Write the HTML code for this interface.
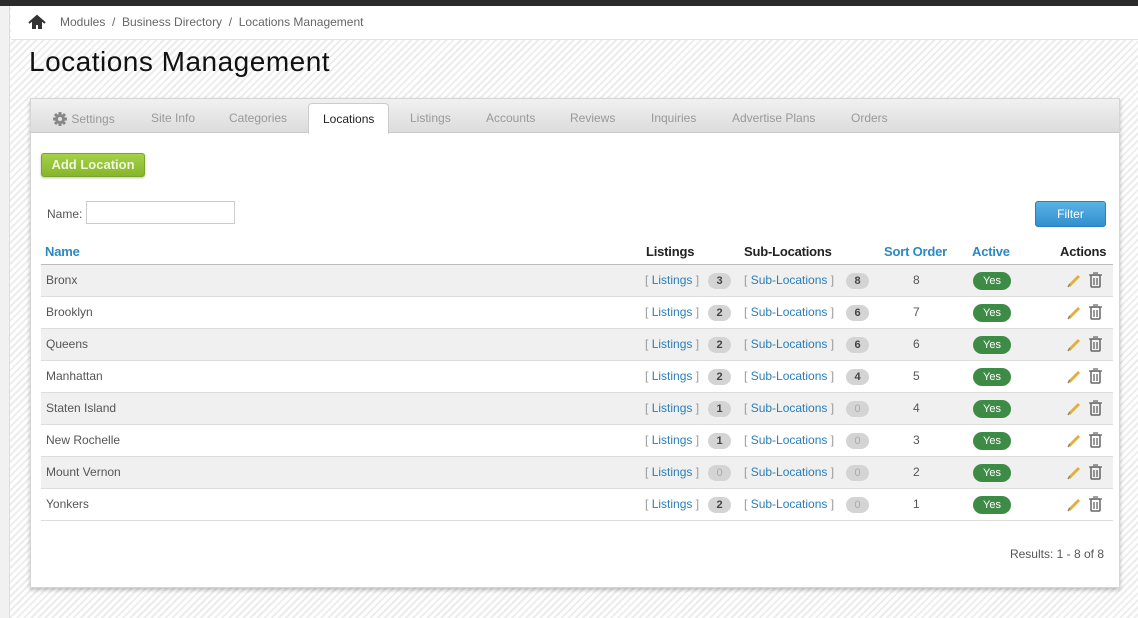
<!DOCTYPE html><html><head><style>
*{box-sizing:border-box;margin:0;padding:0}
body{width:1138px;height:618px;overflow:hidden;font-family:"Liberation Sans",Arial,sans-serif;font-size:12px;color:#555;position:relative;background:repeating-linear-gradient(135deg,#fff 0 3px,#ececec 3px 5px)}
.top{position:absolute;left:0;top:0;width:1138px;height:6px;background:#2b2b2b}
.side{position:absolute;left:0;top:6px;width:10px;height:612px;background:#f1f1f1;border-right:1px solid #ddd}
.bc{position:absolute;left:11px;top:6px;right:0;height:34px;background:#fff;border-bottom:1px solid #e2e2e2;color:#666;font-size:12px;line-height:33px;padding-left:49px}
h1{position:absolute;left:29px;top:46px;font-weight:normal;font-size:28px;color:#111;letter-spacing:.5px}
.panel{position:absolute;left:30px;top:98px;width:1090px;height:490px;background:#fff;border:1px solid #d6d6d6;box-shadow:0 2px 4px rgba(0,0,0,.25)}
.tabs{height:34px;background:linear-gradient(#f1f1f1,#dcdcdc);border-bottom:1px solid #ccc;position:relative}
.tab{position:absolute;top:12px;color:#999;font-size:12px}
.tab.act{top:4px;height:31px;background:#fff;border:1px solid #ccc;border-bottom:none;border-radius:4px 4px 0 0;color:#222;padding:8px 14px 0}
.btn{position:absolute;left:10px;top:54px;width:104px;height:24px;background:linear-gradient(#a4d147,#87b52b);border:1px solid #7aa52a;border-radius:3px;color:#eef7dc;font-weight:bold;font-size:13px;text-align:center;line-height:22px;box-shadow:0 1px 2px rgba(0,0,0,.25)}
.filter{position:absolute;left:1004px;top:102px;width:71px;height:26px;background:linear-gradient(#5bb3e4,#2f8fcf);border:1px solid #2a7fb8;border-radius:3px;color:#fff;text-align:center;line-height:24px;font-size:12px}
.hd{position:absolute;top:145px;font-size:13px;font-weight:bold;color:#222;letter-spacing:-.2px}
.hd.b{color:#2a89c1}
.hl{position:absolute;left:10px;top:165px;width:1072px;border-top:1px solid #bbb}
.row{position:absolute;left:10px;width:1072px;height:32px;border-bottom:1px solid #ddd;line-height:31px}
.row.o{background:#f0f0f0}
.row>span{position:absolute}
a{color:#2a7fb8;text-decoration:none}
.br{color:#999}
.bd{display:inline-block;width:23px;height:16px;border-radius:8px;background:#d4d4d4;color:#444;font-size:11px;text-align:center;line-height:16px;font-weight:bold;font-style:normal;vertical-align:middle}
.bd.z{color:#aaa;font-weight:normal}
.yes{width:38px;height:18px;border-radius:9px;background:#3e8b45;color:#fff;font-size:11px;text-align:center;line-height:18px;top:7px}
.ic{top:7px;line-height:0}
</style></head><body>
<div class="top"></div><div class="side"></div>
<div class="bc"><svg style="position:absolute;left:17px;top:8px" width="18" height="16" viewBox="0 0 18 16"><path d="M9 2L2 8h2v7h4v-4h2v4h4V8h2z" fill="#333"/><path d="M1 9L9 2l8 7" stroke="#333" stroke-width="2" fill="none"/></svg>Modules &nbsp;/&nbsp; Business Directory &nbsp;/&nbsp; Locations Management</div>
<h1>Locations Management</h1>
<div class="panel">
<div class="tabs">
<span class="tab" style="left:21px"><svg width="16" height="16" viewBox="0 0 16 16" style="vertical-align:-4px"><circle cx="8" cy="8" r="5" fill="#888"/><path d="M8 1v14M1 8h14M3 3l10 10M13 3L3 13" stroke="#888" stroke-width="3"/><circle cx="8" cy="8" r="2" fill="#e6e6e6"/></svg> Settings</span>
<span class="tab" style="left:120px">Site Info</span>
<span class="tab" style="left:198px">Categories</span>
<span class="tab act" style="left:277px">Locations</span>
<span class="tab" style="left:379px">Listings</span>
<span class="tab" style="left:455px">Accounts</span>
<span class="tab" style="left:539px">Reviews</span>
<span class="tab" style="left:620px">Inquiries</span>
<span class="tab" style="left:701px">Advertise Plans</span>
<span class="tab" style="left:820px">Orders</span>
</div>
<div class="btn">Add Location</div>
<div style="position:absolute;left:16px;top:108px">Name:</div>
<div style="position:absolute;left:55px;top:102px;width:149px;height:23px;border:1px solid #ccc"></div>
<div class="filter">Filter</div>
<span class="hd b" style="left:14px">Name</span>
<span class="hd" style="left:615px">Listings</span>
<span class="hd" style="left:713px">Sub-Locations</span>
<span class="hd b" style="left:853px">Sort Order</span>
<span class="hd b" style="left:941px">Active</span>
<span class="hd" style="left:1029px">Actions</span>
<div class="hl"></div>

<div class="row o" style="top:166px"><span style="left:5px">Bronx</span><span style="left:604px"><span class="br">[</span> <a>Listings</a> <span class="br">]</span></span><span style="left:667px"><i class="bd">3</i></span><span style="left:703px"><span class="br">[</span> <a>Sub-Locations</a> <span class="br">]</span></span><span style="left:805px"><i class="bd">8</i></span><span style="left:872px">8</span><span class="yes" style="left:932px">Yes</span><span class="ic" style="left:1025px"><svg width="40" height="16"><path d="M3 14l10-10" stroke="#e0b040" stroke-width="3"/><path d="M2 15l2-3" stroke="#888" stroke-width="1.5"/><rect x="25" y="3" width="9" height="12" rx="1" fill="none" stroke="#666" stroke-width="1.5"/><path d="M23 3h13M27 1h5M28 6v7M31 6v7" stroke="#666" stroke-width="1.3"/></svg></span></div>

<div class="row" style="top:198px"><span style="left:5px">Brooklyn</span><span style="left:604px"><span class="br">[</span> <a>Listings</a> <span class="br">]</span></span><span style="left:667px"><i class="bd">2</i></span><span style="left:703px"><span class="br">[</span> <a>Sub-Locations</a> <span class="br">]</span></span><span style="left:805px"><i class="bd">6</i></span><span style="left:872px">7</span><span class="yes" style="left:932px">Yes</span><span class="ic" style="left:1025px"><svg width="40" height="16"><path d="M3 14l10-10" stroke="#e0b040" stroke-width="3"/><path d="M2 15l2-3" stroke="#888" stroke-width="1.5"/><rect x="25" y="3" width="9" height="12" rx="1" fill="none" stroke="#666" stroke-width="1.5"/><path d="M23 3h13M27 1h5M28 6v7M31 6v7" stroke="#666" stroke-width="1.3"/></svg></span></div>

<div class="row o" style="top:230px"><span style="left:5px">Queens</span><span style="left:604px"><span class="br">[</span> <a>Listings</a> <span class="br">]</span></span><span style="left:667px"><i class="bd">2</i></span><span style="left:703px"><span class="br">[</span> <a>Sub-Locations</a> <span class="br">]</span></span><span style="left:805px"><i class="bd">6</i></span><span style="left:872px">6</span><span class="yes" style="left:932px">Yes</span><span class="ic" style="left:1025px"><svg width="40" height="16"><path d="M3 14l10-10" stroke="#e0b040" stroke-width="3"/><path d="M2 15l2-3" stroke="#888" stroke-width="1.5"/><rect x="25" y="3" width="9" height="12" rx="1" fill="none" stroke="#666" stroke-width="1.5"/><path d="M23 3h13M27 1h5M28 6v7M31 6v7" stroke="#666" stroke-width="1.3"/></svg></span></div>

<div class="row" style="top:262px"><span style="left:5px">Manhattan</span><span style="left:604px"><span class="br">[</span> <a>Listings</a> <span class="br">]</span></span><span style="left:667px"><i class="bd">2</i></span><span style="left:703px"><span class="br">[</span> <a>Sub-Locations</a> <span class="br">]</span></span><span style="left:805px"><i class="bd">4</i></span><span style="left:872px">5</span><span class="yes" style="left:932px">Yes</span><span class="ic" style="left:1025px"><svg width="40" height="16"><path d="M3 14l10-10" stroke="#e0b040" stroke-width="3"/><path d="M2 15l2-3" stroke="#888" stroke-width="1.5"/><rect x="25" y="3" width="9" height="12" rx="1" fill="none" stroke="#666" stroke-width="1.5"/><path d="M23 3h13M27 1h5M28 6v7M31 6v7" stroke="#666" stroke-width="1.3"/></svg></span></div>

<div class="row o" style="top:294px"><span style="left:5px">Staten Island</span><span style="left:604px"><span class="br">[</span> <a>Listings</a> <span class="br">]</span></span><span style="left:667px"><i class="bd">1</i></span><span style="left:703px"><span class="br">[</span> <a>Sub-Locations</a> <span class="br">]</span></span><span style="left:805px"><i class="bd z">0</i></span><span style="left:872px">4</span><span class="yes" style="left:932px">Yes</span><span class="ic" style="left:1025px"><svg width="40" height="16"><path d="M3 14l10-10" stroke="#e0b040" stroke-width="3"/><path d="M2 15l2-3" stroke="#888" stroke-width="1.5"/><rect x="25" y="3" width="9" height="12" rx="1" fill="none" stroke="#666" stroke-width="1.5"/><path d="M23 3h13M27 1h5M28 6v7M31 6v7" stroke="#666" stroke-width="1.3"/></svg></span></div>

<div class="row" style="top:326px"><span style="left:5px">New Rochelle</span><span style="left:604px"><span class="br">[</span> <a>Listings</a> <span class="br">]</span></span><span style="left:667px"><i class="bd">1</i></span><span style="left:703px"><span class="br">[</span> <a>Sub-Locations</a> <span class="br">]</span></span><span style="left:805px"><i class="bd z">0</i></span><span style="left:872px">3</span><span class="yes" style="left:932px">Yes</span><span class="ic" style="left:1025px"><svg width="40" height="16"><path d="M3 14l10-10" stroke="#e0b040" stroke-width="3"/><path d="M2 15l2-3" stroke="#888" stroke-width="1.5"/><rect x="25" y="3" width="9" height="12" rx="1" fill="none" stroke="#666" stroke-width="1.5"/><path d="M23 3h13M27 1h5M28 6v7M31 6v7" stroke="#666" stroke-width="1.3"/></svg></span></div>

<div class="row o" style="top:358px"><span style="left:5px">Mount Vernon</span><span style="left:604px"><span class="br">[</span> <a>Listings</a> <span class="br">]</span></span><span style="left:667px"><i class="bd z">0</i></span><span style="left:703px"><span class="br">[</span> <a>Sub-Locations</a> <span class="br">]</span></span><span style="left:805px"><i class="bd z">0</i></span><span style="left:872px">2</span><span class="yes" style="left:932px">Yes</span><span class="ic" style="left:1025px"><svg width="40" height="16"><path d="M3 14l10-10" stroke="#e0b040" stroke-width="3"/><path d="M2 15l2-3" stroke="#888" stroke-width="1.5"/><rect x="25" y="3" width="9" height="12" rx="1" fill="none" stroke="#666" stroke-width="1.5"/><path d="M23 3h13M27 1h5M28 6v7M31 6v7" stroke="#666" stroke-width="1.3"/></svg></span></div>

<div class="row" style="top:390px"><span style="left:5px">Yonkers</span><span style="left:604px"><span class="br">[</span> <a>Listings</a> <span class="br">]</span></span><span style="left:667px"><i class="bd">2</i></span><span style="left:703px"><span class="br">[</span> <a>Sub-Locations</a> <span class="br">]</span></span><span style="left:805px"><i class="bd z">0</i></span><span style="left:872px">1</span><span class="yes" style="left:932px">Yes</span><span class="ic" style="left:1025px"><svg width="40" height="16"><path d="M3 14l10-10" stroke="#e0b040" stroke-width="3"/><path d="M2 15l2-3" stroke="#888" stroke-width="1.5"/><rect x="25" y="3" width="9" height="12" rx="1" fill="none" stroke="#666" stroke-width="1.5"/><path d="M23 3h13M27 1h5M28 6v7M31 6v7" stroke="#666" stroke-width="1.3"/></svg></span></div>

<div style="position:absolute;right:15px;top:448px;color:#555">Results: 1 - 8 of 8</div>
</div>
</body></html>
